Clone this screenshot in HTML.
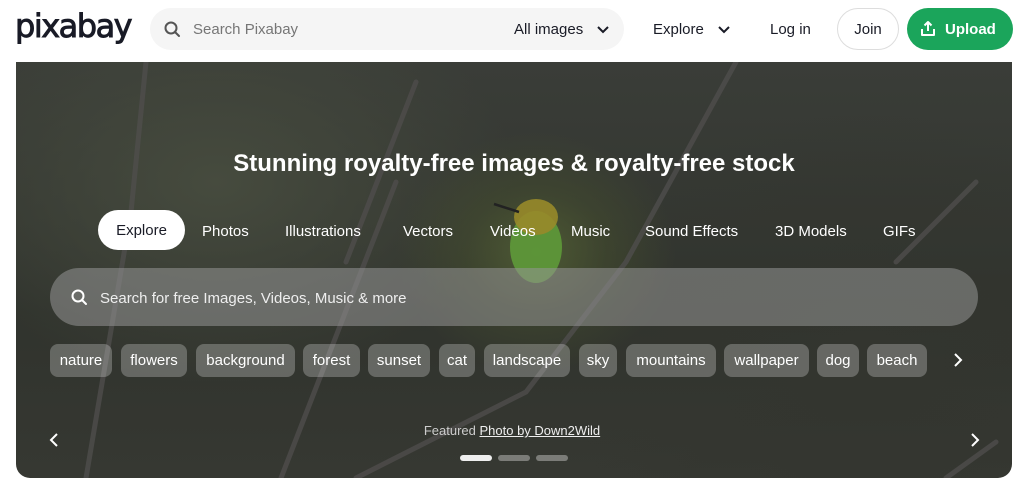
<!DOCTYPE html>
<html><head><meta charset="utf-8"><style>
*{margin:0;padding:0;box-sizing:border-box}
body{width:1024px;height:479px;background:#fff;font-family:"Liberation Sans","DejaVu Sans",sans-serif;position:relative;overflow:hidden;color:#191b26}
.a{position:absolute}
.logo{left:15px;top:7px;font-size:32px;font-weight:400;letter-spacing:-1.5px;color:#191b26;font-family:"DejaVu Sans","Liberation Sans",sans-serif;-webkit-text-stroke:0.9px #191b26}
.sb{left:150px;top:8px;width:474px;height:42px;border-radius:21px;background:#f5f5f5}
.hero{left:16px;top:62px;width:996px;height:416px;border-radius:0 0 14px 14px;overflow:hidden;
background:radial-gradient(ellipse 140px 120px at 520px 190px,#4e5a34 0%,rgba(70,80,45,0.5) 50%,rgba(0,0,0,0) 100%),radial-gradient(ellipse 300px 200px at 200px 120px,#464b3e,rgba(0,0,0,0)),radial-gradient(ellipse 300px 250px at 850px 300px,#33352f,rgba(0,0,0,0)),linear-gradient(180deg,#3a3d38,#30332d 60%,#363832)}
.t{color:#fff;font-size:15px;top:161px}
.tag{position:absolute;top:344px;height:33px;border-radius:8px;background:rgba(255,255,255,0.25);color:#fff;font-size:15px;line-height:33px;text-align:center}
.h{font-size:15px;top:21px}
</style></head><body>
<div class="a logo">pixabay</div>
<div class="a sb"></div>
<svg class="a" style="left:164px;top:21px" width="17" height="17" viewBox="0 0 17 17"><circle cx="7" cy="7" r="5.5" fill="none" stroke="#555" stroke-width="2"/><path d="M11 11l4 4" stroke="#555" stroke-width="2" stroke-linecap="round"/></svg>
<div class="a h" style="left:193px;color:#767676">Search Pixabay</div>
<div class="a h" style="left:514px;color:#191b26">All images</div>
<svg class="a" style="left:597px;top:26px" width="12" height="8"><path d="M1 1l5 5 5-5" stroke="#191b26" stroke-width="2" fill="none"/></svg>
<div class="a h" style="left:653px">Explore</div>
<svg class="a" style="left:718px;top:26px" width="12" height="8"><path d="M1 1l5 5 5-5" stroke="#191b26" stroke-width="2" fill="none"/></svg>
<div class="a h" style="left:770px">Log in</div>
<div class="a" style="left:837px;top:8px;width:62px;height:42px;border:1px solid #ddd;border-radius:21px;font-size:15px;line-height:42px;text-align:center">Join</div>
<div class="a" style="left:907px;top:8px;width:106px;height:42px;background:#1ba55b;border-radius:21px"></div>
<svg class="a" style="left:920px;top:20px" width="16" height="17" viewBox="0 0 16 17"><path d="M8 11V2M4.5 5.5L8 2l3.5 3.5M2 9v6h12V9" stroke="#fff" stroke-width="2" fill="none" stroke-linejoin="round"/></svg>
<div class="a h" style="left:945px;color:#fff;font-weight:bold">Upload</div>

<div class="a hero">
<svg class="a" style="left:0;top:0" width="996" height="416">
<g stroke="#4f4d4c" stroke-width="5" fill="none" opacity="0.8" stroke-linecap="round">
<path d="M130 0 L115 150 L70 416"/><path d="M380 120 L310 300 L265 416"/>
<path d="M720 0 L610 200 L510 330 L340 416"/>
<path d="M400 20 L330 200"/><path d="M980 380 L930 416"/>
<path d="M880 200 L960 120"/>
</g>
<ellipse cx="520" cy="185" rx="26" ry="36" fill="#5e9a38" opacity="0.9"/>
<ellipse cx="520" cy="155" rx="22" ry="18" fill="#98892a" opacity="0.9"/>
<path d="M478 142 L503 150" stroke="#222" stroke-width="2.5"/>
</svg>
<div class="a" style="left:0;width:996px;top:88px;text-align:center;color:#fff;font-size:24px;font-weight:bold">Stunning royalty-free images &amp; royalty-free stock</div>
<div class="a" style="left:82px;top:148px;width:87px;height:40px;border-radius:20px;background:#fff;color:#191b26;font-size:15px;line-height:42px;text-align:center">Explore</div>
<div class="a t" style="left:186px">Photos</div>
<div class="a t" style="left:269px">Illustrations</div>
<div class="a t" style="left:387px">Vectors</div>
<div class="a t" style="left:474px">Videos</div>
<div class="a t" style="left:555px">Music</div>
<div class="a t" style="left:629px">Sound Effects</div>
<div class="a t" style="left:759px">3D Models</div>
<div class="a t" style="left:867px">GIFs</div>
<div class="a" style="left:34px;top:206px;width:928px;height:58px;border-radius:29px;background:rgba(150,150,150,0.55)"></div>
<svg class="a" style="left:55px;top:227px" width="17" height="17" viewBox="0 0 17 17"><circle cx="7" cy="7" r="5.5" fill="none" stroke="#fff" stroke-width="2"/><path d="M11 11l4 4" stroke="#fff" stroke-width="2" stroke-linecap="round"/></svg>
<div class="a" style="left:84px;top:228px;color:#eee;font-size:15px">Search for free Images, Videos, Music &amp; more</div>
</div>
<div class="tag" style="left:50px;width:62px">nature</div>
<div class="tag" style="left:121px;width:66px">flowers</div>
<div class="tag" style="left:196px;width:99px">background</div>
<div class="tag" style="left:303px;width:57px">forest</div>
<div class="tag" style="left:368px;width:62px">sunset</div>
<div class="tag" style="left:439px;width:36px">cat</div>
<div class="tag" style="left:484px;width:86px">landscape</div>
<div class="tag" style="left:579px;width:38px">sky</div>
<div class="tag" style="left:626px;width:90px">mountains</div>
<div class="tag" style="left:724px;width:85px">wallpaper</div>
<div class="tag" style="left:817px;width:42px">dog</div>
<div class="tag" style="left:867px;width:60px">beach</div>
<svg class="a" style="left:953px;top:353px" width="10" height="14"><path d="M2 1l6 6-6 6" stroke="#fff" stroke-width="2" fill="none"/></svg>
<svg class="a" style="left:49px;top:433px" width="10" height="14"><path d="M8 1L2 7l6 6" stroke="#fff" stroke-width="2" fill="none"/></svg>
<svg class="a" style="left:970px;top:433px" width="10" height="14"><path d="M2 1l6 6-6 6" stroke="#fff" stroke-width="2" fill="none"/></svg>
<div class="a" style="left:0;width:1024px;top:423px;text-align:center;font-size:13px;color:#ccc">Featured <span style="text-decoration:underline;color:#eee">Photo by Down2Wild</span></div>
<div class="a" style="left:460px;top:455px;width:32px;height:6px;border-radius:3px;background:#eee"></div>
<div class="a" style="left:498px;top:455px;width:32px;height:6px;border-radius:3px;background:rgba(255,255,255,0.35)"></div>
<div class="a" style="left:536px;top:455px;width:32px;height:6px;border-radius:3px;background:rgba(255,255,255,0.35)"></div>
</body></html>
